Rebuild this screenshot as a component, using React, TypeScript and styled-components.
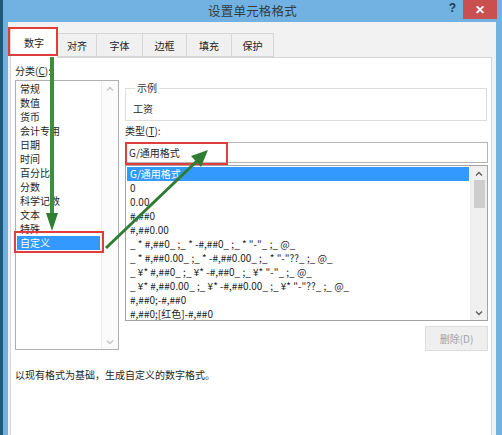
import React from 'react';
import styled, { createGlobalStyle } from 'styled-components';

const GlobalStyle = createGlobalStyle`
  body {
    margin: 0;
    font-family: "Noto Sans CJK SC", "Noto Sans", sans-serif;
    font-size: 10px;
    color: #1e1e1e;
  }
`;

const Window = styled.div`
  position: relative;
  width: 502px;
  height: 435px;
  overflow: hidden;
  display: flex;
  flex-direction: column;
  box-sizing: border-box;
  background: #71b2e2;
  border-left: 3px solid #1f5b78;
`;

const TitleBar = styled.div`
  height: 22px;
  flex: 0 0 22px;
  display: grid;
  grid-template-columns: 1fr auto 1fr;
  align-items: start;
`;

const Title = styled.span`
  font-size: 12.5px;
  line-height: 22px;
  color: #353b42;
  letter-spacing: 0.2px;
`;

const TitleControls = styled.div`
  display: flex;
  justify-content: flex-end;
  align-items: flex-start;
  margin-right: 5px;
`;

const HelpMark = styled.span`
  font-family: "Liberation Sans", sans-serif;
  font-weight: bold;
  font-size: 12px;
  line-height: 16px;
  color: #1d3a55;
  margin-right: 7px;
`;

const CloseButton = styled.div`
  width: 34px;
  height: 19px;
  background: #c9504f;
  color: #fff;
  display: flex;
  align-items: center;
  justify-content: center;
  font-family: "Liberation Sans", sans-serif;
  font-weight: bold;
  font-size: 12px;
`;

const Body = styled.div`
  flex: 1;
  margin: 0 6px 0 5px;
  padding: 0 4px 0 2px;
  background: #f2f2f2;
  display: flex;
  flex-direction: column;
  min-height: 0;
`;

const TabStrip = styled.div`
  height: 35px;
  flex: 0 0 35px;
  display: flex;
  align-items: flex-end;
  position: relative;
  z-index: 1;
`;

const Tab = styled.div<{ $active?: boolean; $w: number }>`
  box-sizing: border-box;
  width: ${(p) => p.$w}px;
  height: ${(p) => (p.$active ? 30 : 24)}px;
  margin-bottom: ${(p) => (p.$active ? -1 : 0)}px;
  border: 1px solid #d6d6d6;
  border-bottom: ${(p) => (p.$active ? 'none' : '1px solid #d6d6d6')};
  margin-left: ${(p) => (p.$active ? 0 : -1)}px;
  background: ${(p) => (p.$active ? '#fff' : '#f0f0f0')};
  display: flex;
  align-items: center;
  justify-content: center;
  padding-bottom: ${(p) => (p.$active ? 2 : 0)}px;
  color: #222;
`;

const Panel = styled.div`
  flex: 1;
  background: #fff;
  border: 1px solid #d6d6d6;
  border-bottom: none;
  padding: 6px 3px 0 4px;
`;

const Columns = styled.div`
  display: grid;
  grid-template-columns: 104px 1fr;
  column-gap: 6px;
`;

const LeftColumn = styled.div`
  display: flex;
  flex-direction: column;
`;

const RightColumn = styled.div`
  display: flex;
  flex-direction: column;
`;

const FieldLabel = styled.div`
  height: 16px;
  line-height: 14px;
  u {
    text-decoration: underline;
  }
`;

const ListBox = styled.div<{ $h: number; $border: string }>`
  box-sizing: border-box;
  height: ${(p) => p.$h}px;
  border: 1px solid ${(p) => p.$border};
  display: flex;
  background: #fff;
`;

const ListItems = styled.div`
  flex: 1;
  padding: 1px 1px 0 1px;
  overflow: hidden;
`;

const ListItem = styled.div<{ $selected?: boolean }>`
  height: 14px;
  line-height: 14px;
  padding-left: 3px;
  white-space: nowrap;
  background: ${(p) => (p.$selected ? '#3399ff' : 'transparent')};
  color: ${(p) => (p.$selected ? '#fff' : '#1e1e1e')};
`;

const ScrollBar = styled.div<{ $bg: string }>`
  width: 16px;
  flex: 0 0 16px;
  background: ${(p) => p.$bg};
  border-left: 1px solid #ececec;
  display: flex;
  flex-direction: column;
  align-items: center;
`;

const ScrollArrow = styled.div<{ $color: string }>`
  height: 14px;
  width: 100%;
  display: flex;
  align-items: center;
  justify-content: center;
  color: ${(p) => p.$color};
`;

const ScrollTrack = styled.div`
  flex: 1;
  width: 100%;
  display: flex;
  flex-direction: column;
  align-items: center;
`;

const ScrollThumb = styled.div`
  width: 11px;
  height: 28px;
  background: #cdcdcd;
`;

const SampleGroup = styled.fieldset`
  margin: 17px 1px 0 0;
  padding: 7px 7px 4px 7px;
  border: 1px solid #dedede;
  min-width: 0;
  legend {
    padding: 0 2px;
    margin-left: 2px;
    line-height: 14px;
    color: #333;
  }
`;

const SampleValue = styled.div`
  line-height: 14px;
  height: 14px;
`;

const TypeLabel = styled(FieldLabel)`
  margin-top: 3px;
  height: 18px;
`;

const TypeInput = styled.div`
  box-sizing: border-box;
  height: 21px;
  border: 1px solid #b5b5b5;
  padding-left: 3px;
  line-height: 19px;
  margin-bottom: 2px;
`;

const ButtonRow = styled.div`
  display: flex;
  justify-content: flex-end;
  margin-top: 5px;
`;

const DeleteButton = styled.div`
  box-sizing: border-box;
  width: 63px;
  height: 25px;
  border: 1px solid #dcdcdc;
  background: #efefef;
  color: #a3a3a3;
  display: flex;
  align-items: center;
  justify-content: center;
`;

const Description = styled.div`
  margin-top: 17px;
  line-height: 14px;
  color: #1e1e1e;
`;

const Annotation = styled.div<{ $x: number; $y: number; $w: number; $h: number }>`
  position: absolute;
  left: ${(p) => p.$x}px;
  top: ${(p) => p.$y}px;
  width: ${(p) => p.$w}px;
  height: ${(p) => p.$h}px;
  box-sizing: border-box;
  border: 2px solid #e03d3f;
  pointer-events: none;
  z-index: 3;
`;

const ArrowLayer = styled.svg`
  position: absolute;
  left: 0;
  top: 0;
  z-index: 4;
  pointer-events: none;
`;

const UpChevron = () => (
  <svg width="8" height="5" viewBox="0 0 8 5">
    <path d="M1 4.5 L4 1.5 L7 4.5" fill="none" stroke="currentColor" strokeWidth="1.4" />
  </svg>
);

const DownChevron = () => (
  <svg width="8" height="5" viewBox="0 0 8 5">
    <path d="M1 0.5 L4 3.5 L7 0.5" fill="none" stroke="currentColor" strokeWidth="1.4" />
  </svg>
);

const tabs = [
  { label: '数字', w: 48, active: true },
  { label: '对齐', w: 40 },
  { label: '字体', w: 47 },
  { label: '边框', w: 45 },
  { label: '填充', w: 46 },
  { label: '保护', w: 43 },
];

const categories = ['常规', '数值', '货币', '会计专用', '日期', '时间', '百分比', '分数', '科学记数', '文本', '特殊', '自定义'];

const formats = [
  'G/通用格式',
  '0',
  '0.00',
  '#,##0',
  '#,##0.00',
  '_ * #,##0_ ;_ * -#,##0_ ;_ * "-"_ ;_ @_',
  '_ * #,##0.00_ ;_ * -#,##0.00_ ;_ * "-"??_ ;_ @_',
  '_ ¥* #,##0_ ;_ ¥* -#,##0_ ;_ ¥* "-"_ ;_ @_',
  '_ ¥* #,##0.00_ ;_ ¥* -#,##0.00_ ;_ ¥* "-"??_ ;_ @_',
  '#,##0;-#,##0',
  '#,##0;[红色]-#,##0',
];

export default function App() {
  return (
    <>
      <GlobalStyle />
      <Window>
        <TitleBar>
          <span />
          <Title>设置单元格格式</Title>
          <TitleControls>
            <HelpMark>?</HelpMark>
            <CloseButton>✕</CloseButton>
          </TitleControls>
        </TitleBar>
        <Body>
          <TabStrip>
            {tabs.map((t) => (
              <Tab key={t.label} $active={t.active} $w={t.w}>
                {t.label}
              </Tab>
            ))}
          </TabStrip>
          <Panel>
            <Columns>
              <LeftColumn>
                <FieldLabel>
                  分类(<u>C</u>):
                </FieldLabel>
                <ListBox $h={270} $border="#b0b0b0">
                  <ListItems>
                    {categories.map((c) => (
                      <ListItem key={c} $selected={c === '自定义'}>
                        {c}
                      </ListItem>
                    ))}
                  </ListItems>
                  <ScrollBar $bg="#fbfbfb">
                    <ScrollArrow $color="#c6c6c6">
                      <UpChevron />
                    </ScrollArrow>
                    <ScrollTrack />
                    <ScrollArrow $color="#c6c6c6">
                      <DownChevron />
                    </ScrollArrow>
                  </ScrollBar>
                </ListBox>
              </LeftColumn>
              <RightColumn>
                <SampleGroup>
                  <legend>示例</legend>
                  <SampleValue>工资</SampleValue>
                </SampleGroup>
                <TypeLabel>
                  类型(<u>T</u>):
                </TypeLabel>
                <TypeInput>G/通用格式</TypeInput>
                <ListBox $h={156} $border="#a3a3a3">
                  <ListItems>
                    {formats.map((f, i) => (
                      <ListItem key={f} $selected={i === 0}>
                        {f}
                      </ListItem>
                    ))}
                  </ListItems>
                  <ScrollBar $bg="#f0f0f0">
                    <ScrollArrow $color="#606060">
                      <UpChevron />
                    </ScrollArrow>
                    <ScrollTrack>
                      <ScrollThumb />
                    </ScrollTrack>
                    <ScrollArrow $color="#606060">
                      <DownChevron />
                    </ScrollArrow>
                  </ScrollBar>
                </ListBox>
                <ButtonRow>
                  <DeleteButton>删除(D)</DeleteButton>
                </ButtonRow>
              </RightColumn>
            </Columns>
            <Description>以现有格式为基础，生成自定义的数字格式。</Description>
          </Panel>
        </Body>

        <Annotation $x={5} $y={27} $w={50} $h={29} />
        <Annotation $x={11} $y={231} $w={90} $h={22} />
        <Annotation $x={122} $y={142} $w={103} $h={23} />

        <ArrowLayer width="502" height="435" viewBox="0 0 502 435">
          <line x1="49" y1="57" x2="49" y2="215" stroke="#3b8f3d" strokeWidth="4" />
          <polygon points="43,213 55,213 49,231" fill="#2f7f33" />
          <line x1="103" y1="248" x2="195" y2="160" stroke="#2f7d32" strokeWidth="3" />
          <polygon points="188,156 198,167 205,150" fill="#2f7d32" />
        </ArrowLayer>
      </Window>
    </>
  );
}
